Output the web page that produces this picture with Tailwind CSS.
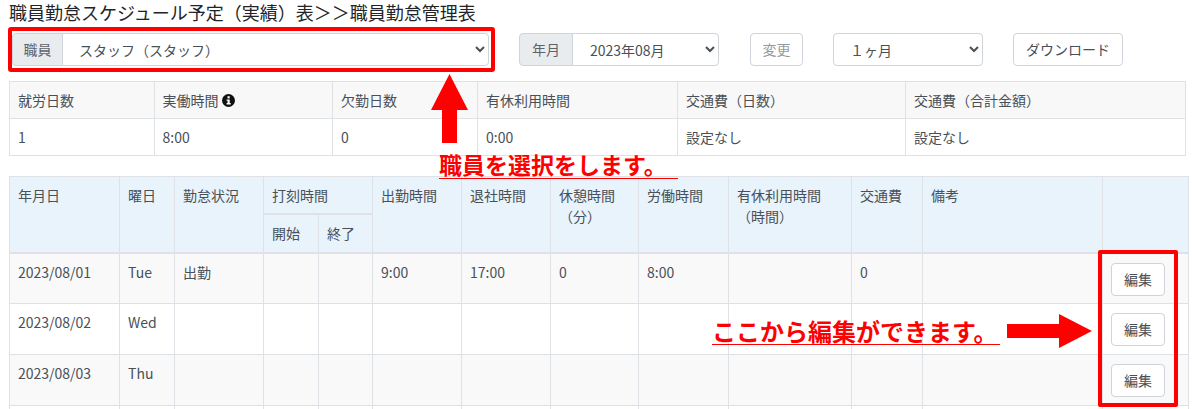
<!DOCTYPE html>
<html lang="ja">
<head>
  <meta charset="UTF-8" />
  <title>職員勤怠管理表</title>
  <script src="https://cdn.jsdelivr.net/npm/@tailwindcss/browser@4"></script>
</head>
<body class="relative h-[409px] overflow-hidden bg-white font-['Noto_Sans_CJK_JP','Noto_Sans',sans-serif] text-[14px] leading-[21px] text-[#495057]">

  <h1 class="pl-[9px] pt-[0px] text-[18px] leading-[24px] text-[#212529]">職員勤怠スケジュール予定（実績）表＞＞職員勤怠管理表</h1>

  <!-- toolbar -->
  <div class="mt-[9px] flex h-[33px] items-stretch pl-[12px]">
    <div class="flex w-[477px]">
      <span class="flex w-[51px] items-center justify-center rounded-l border border-[#ced4da] bg-[#e9ecef] text-[#5c636a]">職員</span>
      <select class="-ml-px flex-1 rounded-r border border-[#ced4da] bg-white pl-[12px] text-[14px] text-[#495057]">
        <option>スタッフ（スタッフ）</option>
      </select>
    </div>
    <div class="ml-[30px] flex w-[200px]">
      <span class="flex w-[54px] items-center justify-center rounded-l border border-[#ced4da] bg-[#e9ecef] text-[#5c636a]">年月</span>
      <select class="-ml-px flex-1 rounded-r border border-[#ced4da] bg-white pl-[13px] text-[14px] text-[#495057]">
        <option>2023年08月</option>
      </select>
    </div>
    <button disabled class="ml-[31px] w-[53px] rounded border border-[#ced4da] bg-white pb-[1px] text-[#495057]/60">変更</button>
    <select class="ml-[30px] w-[150px] rounded border border-[#ced4da] bg-white pl-[12px] text-[14px] text-[#495057]">
      <option>１ヶ月</option>
    </select>
    <button class="ml-[30px] w-[110px] rounded border border-[#ced4da] bg-white text-[#495057]">ダウンロード</button>
  </div>

  <!-- summary -->
  <table class="ml-[9px] mt-[15px] w-[1177px] table-fixed border-collapse">
    <colgroup>
      <col class="w-[145px]" /><col class="w-[178px]" /><col class="w-[145px]" /><col class="w-[200px]" /><col class="w-[228px]" /><col />
    </colgroup>
    <tr class="h-[37px] bg-[#f8f8f8]">
      <th class="border border-[#dee2e6] px-[8px] text-left font-normal">就労日数</th>
      <th class="border border-[#dee2e6] pl-[7.500px] text-left font-normal">
        <span class="flex items-center gap-[3px]">実働時間
          <svg class="h-[13px] w-[13px]" viewBox="0 0 13 13"><circle cx="6.5" cy="6.5" r="6.5" fill="#111" /><rect x="5.5" y="2.2" width="2.2" height="2.2" fill="#fff" /><path d="M4.6 5.5h3.1v3.6h1v1.3H4.6V9.1h1V6.8h-1z" fill="#fff" /></svg>
        </span>
      </th>
      <th class="border border-[#dee2e6] px-[8px] text-left font-normal">欠勤日数</th>
      <th class="border border-[#dee2e6] px-[8px] text-left font-normal">有休利用時間</th>
      <th class="border border-[#dee2e6] px-[8px] text-left font-normal">交通費（日数）</th>
      <th class="border border-[#dee2e6] px-[8px] text-left font-normal">交通費（合計金額）</th>
    </tr>
    <tr class="h-[37px]">
      <td class="border border-[#dee2e6] px-[8px]">1</td>
      <td class="border border-[#dee2e6] pl-[7.500px]">8:00</td>
      <td class="border border-[#dee2e6] px-[8px]">0</td>
      <td class="border border-[#dee2e6] px-[8px]">0:00</td>
      <td class="border border-[#dee2e6] px-[8px]">設定なし</td>
      <td class="border border-[#dee2e6] px-[8px]">設定なし</td>
    </tr>
  </table>

  <!-- daily table -->
  <table class="ml-[9px] mt-[20px] w-[1180px] table-fixed border-collapse">
    <colgroup>
      <col class="w-[110px]" /><col class="w-[55px]" /><col class="w-[89px]" /><col class="w-[55px]" /><col class="w-[54px]" /><col class="w-[89px]" /><col class="w-[89px]" /><col class="w-[88px]" /><col class="w-[90px]" /><col class="w-[123px]" /><col class="w-[71px]" /><col class="w-[180px]" /><col />
    </colgroup>
    <thead class="bg-[#e8f3fc] align-top">
      <tr class="h-[37px]">
        <th rowspan="2" class="border border-b-2 border-[#dee2e6] px-[8px] pt-[8px] text-left font-normal">年月日</th>
        <th rowspan="2" class="border border-b-2 border-[#dee2e6] px-[8px] pt-[8px] text-left font-normal">曜日</th>
        <th rowspan="2" class="border border-b-2 border-[#dee2e6] px-[8px] pt-[8px] text-left font-normal">勤怠状況</th>
        <th colspan="2" class="border border-[#dee2e6] px-[8px] pt-[8px] text-left font-normal">打刻時間</th>
        <th rowspan="2" class="border border-b-2 border-[#dee2e6] px-[8px] pt-[8px] text-left font-normal">出勤時間</th>
        <th rowspan="2" class="border border-b-2 border-[#dee2e6] px-[8px] pt-[8px] text-left font-normal">退社時間</th>
        <th rowspan="2" class="border border-b-2 border-[#dee2e6] px-[8px] pt-[8px] text-left font-normal">休憩時間<br />（分）</th>
        <th rowspan="2" class="border border-b-2 border-[#dee2e6] px-[8px] pt-[8px] text-left font-normal">労働時間</th>
        <th rowspan="2" class="border border-b-2 border-[#dee2e6] px-[8px] pt-[8px] text-left font-normal">有休利用時間<br />（時間）</th>
        <th rowspan="2" class="border border-b-2 border-[#dee2e6] px-[8px] pt-[8px] text-left font-normal">交通費</th>
        <th rowspan="2" class="border border-b-2 border-[#dee2e6] px-[8px] pt-[8px] text-left font-normal">備考</th>
        <th rowspan="2" class="border border-b-2 border-[#dee2e6]"></th>
      </tr>
      <tr class="h-[39px]">
        <th class="border border-t-2 border-b-2 border-[#dee2e6] px-[8px] pt-[8px] text-left font-normal">開始</th>
        <th class="border border-t-2 border-b-2 border-[#dee2e6] px-[8px] pt-[8px] text-left font-normal">終了</th>
      </tr>
    </thead>
    <tbody class="align-top">
      <tr class="h-[51px] bg-[#f9f9f9]">
        <td class="border border-[#dee2e6] px-[8px] pt-[8px]">2023/08/01</td>
        <td class="border border-[#dee2e6] px-[8px] pt-[8px]">Tue</td>
        <td class="border border-[#dee2e6] px-[8px] pt-[8px]">出勤</td>
        <td class="border border-[#dee2e6]"></td>
        <td class="border border-[#dee2e6]"></td>
        <td class="border border-[#dee2e6] px-[8px] pt-[8px]">9:00</td>
        <td class="border border-[#dee2e6] px-[8px] pt-[8px]">17:00</td>
        <td class="border border-[#dee2e6] px-[8px] pt-[8px]">0</td>
        <td class="border border-[#dee2e6] px-[8px] pt-[8px]">8:00</td>
        <td class="border border-[#dee2e6]"></td>
        <td class="border border-[#dee2e6] px-[8px] pt-[8px]">0</td>
        <td class="border border-[#dee2e6]"></td>
        <td class="border border-[#dee2e6] pl-[8px] pt-[9px]"><button class="h-[33px] w-[54px] rounded border border-[#ced4da] bg-white">編集</button></td>
      </tr>
      <tr class="h-[51px]">
        <td class="border border-[#dee2e6] px-[8px] pt-[8px]">2023/08/02</td>
        <td class="border border-[#dee2e6] px-[8px] pt-[8px]">Wed</td>
        <td class="border border-[#dee2e6]"></td>
        <td class="border border-[#dee2e6]"></td>
        <td class="border border-[#dee2e6]"></td>
        <td class="border border-[#dee2e6]"></td>
        <td class="border border-[#dee2e6]"></td>
        <td class="border border-[#dee2e6]"></td>
        <td class="border border-[#dee2e6]"></td>
        <td class="border border-[#dee2e6]"></td>
        <td class="border border-[#dee2e6]"></td>
        <td class="border border-[#dee2e6]"></td>
        <td class="border border-[#dee2e6] pl-[8px] pt-[9px]"><button class="h-[33px] w-[54px] rounded border border-[#ced4da] bg-white">編集</button></td>
      </tr>
      <tr class="h-[51px] bg-[#f9f9f9]">
        <td class="border border-[#dee2e6] px-[8px] pt-[8px]">2023/08/03</td>
        <td class="border border-[#dee2e6] px-[8px] pt-[8px]">Thu</td>
        <td class="border border-[#dee2e6]"></td>
        <td class="border border-[#dee2e6]"></td>
        <td class="border border-[#dee2e6]"></td>
        <td class="border border-[#dee2e6]"></td>
        <td class="border border-[#dee2e6]"></td>
        <td class="border border-[#dee2e6]"></td>
        <td class="border border-[#dee2e6]"></td>
        <td class="border border-[#dee2e6]"></td>
        <td class="border border-[#dee2e6]"></td>
        <td class="border border-[#dee2e6]"></td>
        <td class="border border-[#dee2e6] pl-[8px] pt-[9px]"><button class="h-[33px] w-[54px] rounded border border-[#ced4da] bg-white">編集</button></td>
      </tr>
      <tr class="h-[51px]">
        <td class="border border-[#dee2e6]"></td><td class="border border-[#dee2e6]"></td><td class="border border-[#dee2e6]"></td><td class="border border-[#dee2e6]"></td><td class="border border-[#dee2e6]"></td><td class="border border-[#dee2e6]"></td><td class="border border-[#dee2e6]"></td><td class="border border-[#dee2e6]"></td><td class="border border-[#dee2e6]"></td><td class="border border-[#dee2e6]"></td><td class="border border-[#dee2e6]"></td><td class="border border-[#dee2e6]"></td><td class="border border-[#dee2e6]"></td>
      </tr>
    </tbody>
  </table>

  <!-- red annotations over the screenshot -->
  <div class="absolute left-[8px] top-[27px] h-[45px] w-[487px] rounded-[3px] border-[4px] border-[#ff0000]"></div>
  <div class="absolute left-[1098px] top-[250px] h-[157px] w-[80px] rounded-[2px] border-[4px] border-[#ff0000]"></div>

  <svg class="absolute left-[430px] top-[73px]" width="40" height="71" viewBox="0 0 40 71">
    <path d="M19.500 1 38 37H27V70H12V37H1z" fill="#ff0000" />
  </svg>
  <svg class="absolute left-[1006px] top-[313px]" width="88" height="36" viewBox="0 0 88 36">
    <path d="M1 11H53V1L86 18 53 35V25H1z" fill="#ff0000" />
  </svg>

  <div class="absolute left-[439px] top-[151px] w-[239px] border-b border-[#ff0000] text-[23px] font-bold leading-[27px] text-[#ff0000]">職員を選択をします。</div>
  <div class="absolute left-[712px] top-[317px] w-[288px] border-b border-[#ff0000] text-[24px] font-bold leading-[27px] text-[#ff0000]">ここから編集ができます。</div>

</body>
</html>
